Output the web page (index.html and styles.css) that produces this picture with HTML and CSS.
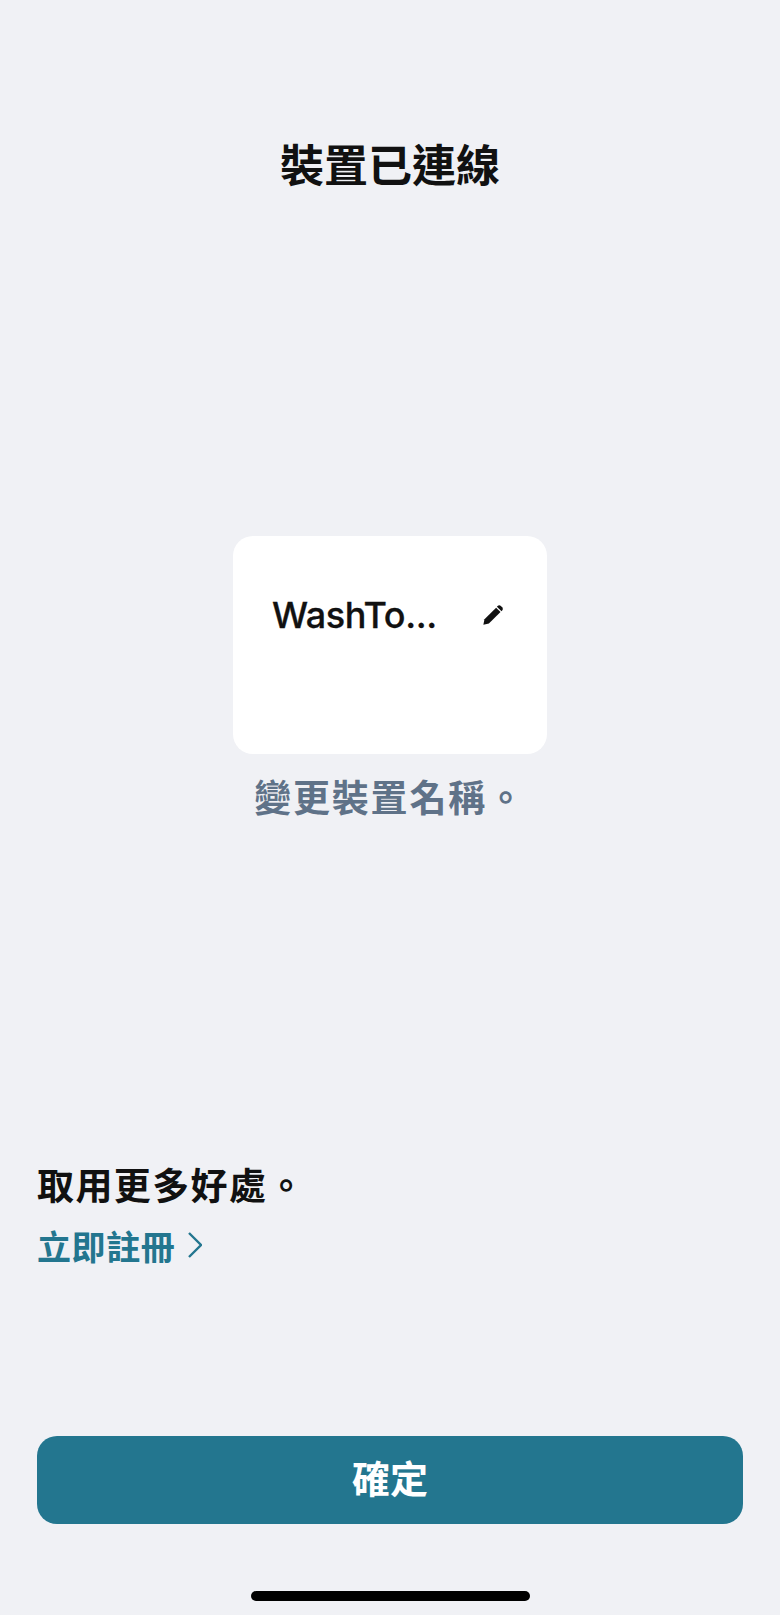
FILE: index.html
```html
<!DOCTYPE html>
<html lang="zh-Hant">
<head>
    <meta charset="UTF-8">
    <meta name="viewport" content="width=device-width, initial-scale=1.0">
    <title>裝置已連線</title>
    <link rel="stylesheet" href="styles.css">
</head>
<body>
    <div class="page">
        <h1 class="title">裝置已連線</h1>

        <div class="device">
            <div class="card">
                <div class="card-row">
                    <span class="card-name">WashTo...</span>
                    <svg class="pencil" viewBox="0 0 24 24" aria-hidden="true">
                        <path d="M1.5 22.5l1.2-6L15.4 4l4.8 4.8L7.5 21.3z"/>
                        <path d="M17 2.2a2.6 2.6 0 0 1 3.6 0l1.4 1.4a2.6 2.6 0 0 1 0 3.6l-.7.7-5-5z"/>
                    </svg>
                </div>
            </div>
            <p class="hint">變更裝置名稱。</p>
        </div>

        <div class="promo">
            <p class="promo-title">取用更多好處。</p>
            <a class="promo-link" href="#">
                立即註冊
                <svg class="chevron" viewBox="0 0 14 26" aria-hidden="true">
                    <path d="M1 1l12 12L1 25"/>
                </svg>
            </a>
        </div>

        <button class="confirm">確定</button>

        <div class="home-bar"></div>
    </div>
</body>
</html>
```
FILE: styles.css
```css
body {
    margin: 0;
    background-color: #f0f1f5;
    font-family: 'Inter', 'Noto Sans CJK TC', sans-serif;
}

.page {
    display: flex;
    flex-direction: column;
    height: 1615px;
    overflow: hidden;
    box-sizing: border-box;
    padding: 0 37px;
}

.title {
    margin: 133px 0 0;
    height: 66px;
    line-height: 66px;
    font-size: 44px;
    font-weight: 600;
    text-align: center;
    color: #111;
}

.device {
    display: flex;
    flex-direction: column;
    align-items: center;
    margin-top: 337px;
}

.card {
    box-sizing: border-box;
    width: 314px;
    height: 218px;
    padding: 56px 43px 0 39px;
    background-color: #fff;
    border-radius: 20px;
}

.card-row {
    display: flex;
    justify-content: space-between;
    align-items: center;
    height: 46px;
}

.card-name {
    font-size: 36px;
    font-weight: 500;
    letter-spacing: -0.4px;
    -webkit-text-stroke: 0.3px #111;
    color: #111;
}

.pencil {
    width: 22px;
    height: 22px;
    fill: #111;
}

.hint {
    margin: 19px 0 0;
    height: 52px;
    line-height: 52px;
    font-size: 37px;
    font-weight: 600;
    letter-spacing: 1.8px;
    color: #5f7288;
}

.promo {
    margin-top: 332px;
}

.promo-title {
    margin: 0;
    height: 60px;
    line-height: 60px;
    font-size: 37px;
    font-weight: 600;
    letter-spacing: 1.4px;
    color: #111;
}

.promo-link {
    display: flex;
    align-items: center;
    gap: 13px;
    height: 56px;
    font-size: 34px;
    font-weight: 600;
    letter-spacing: 0.6px;
    color: #23768f;
    text-decoration: none;
}

.chevron {
    width: 14px;
    height: 26px;
    fill: none;
    stroke: #23768f;
    stroke-width: 2.4;
}

.confirm {
    height: 88px;
    margin-top: 163px;
    padding: 0 0 8px;
    border: none;
    border-radius: 20px;
    background-color: #23768f;
    color: #fff;
    font-family: inherit;
    font-size: 38px;
    font-weight: 600;
}

.home-bar {
    align-self: center;
    width: 279px;
    height: 10px;
    margin-top: 67px;
    border-radius: 5px;
    background-color: #000;
}
```
